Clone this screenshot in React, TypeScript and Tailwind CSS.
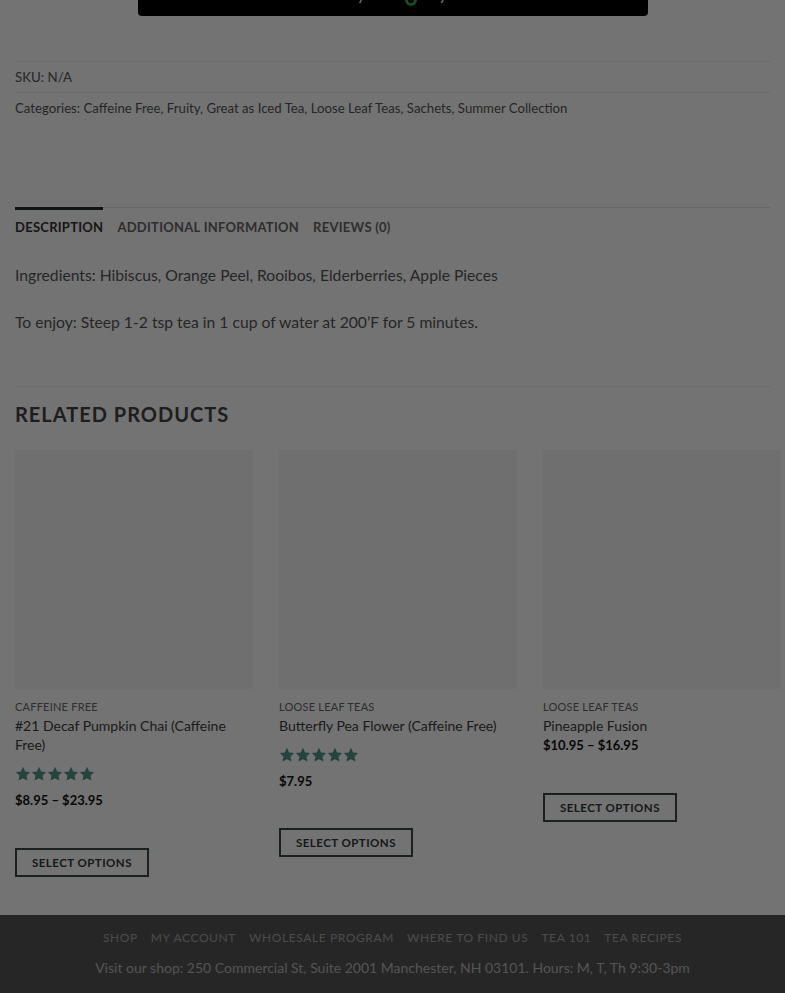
const font = { fontFamily: 'Lato, "Noto Sans", sans-serif' };

type Product = {
  cat: string;
  name: string;
  rated: boolean;
  price: string;
  buttonGap: string;
};

const products: Product[] = [
  { cat: 'Caffeine Free', name: '#21 Decaf Pumpkin Chai (Caffeine Free)', rated: true, price: '$8.95 – $23.95', buttonGap: 'mt-[39px]' },
  { cat: 'Loose Leaf Teas', name: 'Butterfly Pea Flower (Caffeine Free)', rated: true, price: '$7.95', buttonGap: 'mt-[38px]' },
  { cat: 'Loose Leaf Teas', name: 'Pineapple Fusion', rated: false, price: '$10.95 – $16.95', buttonGap: 'mt-[39px]' },
];

function StarIcon() {
  return (
    <svg viewBox="0 0 24 24" className="h-[16px] w-[16px]">
      <path
        d="M12 1.2l3.3 6.9 7.5 1-5.5 5.2 1.4 7.5L12 18.2l-6.7 3.6 1.4-7.5L1.2 9.1l7.5-1z"
        fill="#4f9685"
      />
    </svg>
  );
}

function Stars() {
  return (
    <div className="mt-[12px] flex">
      {[0, 1, 2, 3, 4].map((i) => (
        <StarIcon key={i} />
      ))}
    </div>
  );
}

function ProductCard({ p }: { p: Product }) {
  return (
    <div className="w-[238px] shrink-0">
      <div className="h-[239px] w-full bg-[#f6f6f6]" />
      <div className="mt-[11px] text-[11px] uppercase leading-[14px] tracking-[0.02em] text-[#666]">{p.cat}</div>
      <div className="mt-[2px] text-[14px] leading-[19px] text-[#3d3d3d]">{p.name}</div>
      {p.rated ? <Stars /> : null}
      <div className={`${p.rated ? 'mt-[10px]' : 'mt-[2px]'} text-[13px] font-bold leading-[17px] text-[#111]`}>
        {p.price}
      </div>
      <div className={p.buttonGap}>
        <span className="inline-flex h-[29px] items-center border-2 border-[#3a4545] px-[15px] text-[11.5px] font-bold uppercase tracking-[0.04em] text-[#2f3838]">
          Select options
        </span>
      </div>
    </div>
  );
}

export default function App() {
  return (
    <div className="relative min-h-[993px] overflow-hidden bg-white" style={font}>
      <div className="px-[15px]">
        <div className="flex justify-center">
          <div className="-mt-[32px] flex h-[48px] w-[510px] items-end justify-center rounded-[4px] bg-black pb-[10px] text-[16px] text-white">
            Buy with <span className="mx-[5px] inline-block h-[12px] w-[12px] rounded-full border-[3px] border-[#34a853]" /> Pay
          </div>
        </div>

        <div className="mt-[45px] border-t border-[#ececec]" />
        <div className="py-[7px] text-[13.3px] leading-[16px] text-[#555]">SKU: N/A</div>
        <div className="border-t border-[#ececec]" />
        <div className="py-[7px] text-[13.2px] leading-[17px] text-[#555]">
          Categories: Caffeine Free, Fruity, Great as Iced Tea, Loose Leaf Teas, Sachets, Summer Collection
        </div>

        <div className="mt-[83px] border-t border-[#e5e5e5]">
          <div className="flex gap-[14px]">
            <div className="-mt-[1px] border-t-[3px] border-[#222b2b] pt-[9px] text-[13px] font-bold uppercase leading-[17px] tracking-[0.02em] text-[#333]">
              Description
            </div>
            <div className="pt-[11px] text-[13px] font-bold uppercase leading-[17px] tracking-[0.02em] text-[#666]">
              Additional information
            </div>
            <div className="pt-[11px] text-[13px] font-bold uppercase leading-[17px] tracking-[0.02em] text-[#666]">
              Reviews (0)
            </div>
          </div>
        </div>

        <div className="mt-[29px] text-[15.7px] leading-[20px] text-[#555]">
          Ingredients: Hibiscus, Orange Peel, Rooibos, Elderberries, Apple Pieces
        </div>
        <div className="mt-[27px] text-[15.7px] leading-[20px] text-[#555]">
          To enjoy: Steep 1-2 tsp tea in 1 cup of water at 200’F for 5 minutes.
        </div>

        <div className="mt-[54px] border-t border-[#ececec]" />
        <div className="mt-[13px] text-[20px] font-bold uppercase leading-[28px] tracking-[0.05em] text-[#444]">
          Related Products
        </div>

        <div className="mt-[22px] flex gap-[26px]">
          {products.map((p) => (
            <ProductCard key={p.name} p={p} />
          ))}
        </div>
      </div>

      <footer className="mt-[38px] bg-[#555] pb-[20px] pt-[15px] text-center">
        <div className="flex justify-center gap-[13px] text-[12px] uppercase leading-[16px] tracking-[0.05em] text-[#a8a8a8]">
          <span>Shop</span>
          <span>My Account</span>
          <span>Wholesale Program</span>
          <span>Where to find us</span>
          <span>Tea 101</span>
          <span>Tea Recipes</span>
        </div>
        <div className="mt-[13px] text-[14px] leading-[18px] text-[#bbb]">
          Visit our shop: 250 Commercial St, Suite 2001 Manchester, NH 03101. Hours: M, T, Th 9:30-3pm
        </div>
      </footer>

      <div className="pointer-events-none absolute inset-0 bg-black/55" />
    </div>
  );
}
